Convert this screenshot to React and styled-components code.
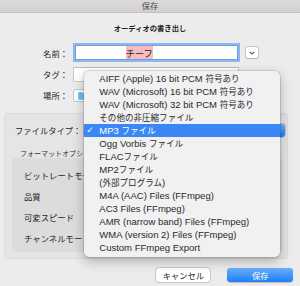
import React from 'react';
import styled, { createGlobalStyle } from 'styled-components';

const Global = createGlobalStyle`
  html, body { margin: 0; padding: 0; background: #ececec; }
  body {
    font-family: "Liberation Sans", "Noto Sans CJK JP", sans-serif;
    -webkit-font-smoothing: antialiased;
  }
  * { box-sizing: border-box; }
`;

const JP = '"Noto Sans CJK JP", "Liberation Sans", sans-serif';

const Window = styled.div`
  position: relative;
  width: 300px;
  height: 286px;
  overflow: hidden;
  background: #ececec;
  display: flex;
  flex-direction: column;
`;

const TitleBar = styled.div`
  height: 13px;
  flex: none;
  border-bottom: 1px solid #c2c0c2;
  background: linear-gradient(#dcdadc, #d2d0d2);
  text-align: center;
  font: 8.3px/10px ${JP};
  color: #4b4b4b;
`;

const Heading = styled.div`
  margin-top: 10px;
  text-align: center;
  font: 600 7.3px/10px ${JP};
  color: #1e1e1e;
`;

const Form = styled.div`
  display: flex;
  flex-direction: column;
`;

const Row = styled.div`
  display: grid;
  grid-template-columns: 68px 1fr;
  column-gap: 4.5px;
  align-items: center;
  height: ${(p) => p.$h}px;
  margin-top: ${(p) => p.$mt}px;
`;

const Label = styled.div`
  text-align: right;
  font: 8.3px/10px ${JP};
  color: #262626;
  white-space: nowrap;
`;

const NameWrap = styled.div`
  display: flex;
  align-items: center;
  gap: 6.8px;
`;

const NameInput = styled.div`
  margin-left: 2.5px;
  width: 163px;
  height: 15px;
  border: 1px solid #6f9fe0;
  box-shadow: 0 0 0 2px #8db8ef;
  background: #fff;
  display: flex;
  align-items: center;
  padding-left: 0.5px;
`;

const Selection = styled.span`
  display: inline-flex;
  align-items: center;
  height: 12.6px;
  padding: 0 0.5px 0 0.8px;
  background: #f7babd;
  font: 9.2px/12px ${JP};
  color: #1e1e1e;
`;

const Redact = styled.span`
  display: inline-block;
  width: 48.5px;
  height: 100%;
  background: #fff;
`;

const SmallButton = styled.div`
  width: 14.7px;
  height: 12.7px;
  border: 1px solid #c6c6c6;
  border-bottom-color: #b4b4b4;
  border-radius: 3px;
  background: #fff;
  display: flex;
  align-items: center;
  justify-content: center;
`;

const TextField = styled.div`
  width: 166px;
  height: 15px;
  border: 1px solid #c9c9c9;
  border-top-color: #b9b9b9;
  background: #fff;
`;

const LocPopup = styled.div`
  width: 130px;
  height: 12.4px;
  border: 1px solid #c6c6c6;
  border-radius: 3px;
  background: #fff;
  display: flex;
  align-items: center;
  padding-left: 4.5px;
`;

const Panel = styled.div`
  margin: 11px 12px 0 4px;
  padding: 11.3px 3px 7.3px 8px;
  background: #e5e5e5;
  border-radius: 4px;
  box-shadow: inset 0 0 0 1px #dcdcdc;
`;

const FileTypeRow = styled.div`
  display: flex;
  align-items: center;
  height: 13px;
  padding-left: 3px;
`;

const FileTypeLabel = styled(Label)`
  width: 69px;
  text-align: left;
`;

const Popup = styled.div`
  position: relative;
  flex: 1;
  height: 13px;
  border-radius: 3px;
  background: #fff;
  box-shadow: 0 0 0 1px #c3c3c3;
`;

const PopupArrows = styled.div`
  position: absolute;
  right: 0;
  top: 0;
  bottom: 0;
  width: 14px;
  border-radius: 0 3px 3px 0;
  background: linear-gradient(#6bb2fb, #1b7cf5);
  display: flex;
  align-items: center;
  justify-content: center;
`;

const FormatLabel = styled.div`
  margin-top: 12.5px;
  padding-left: 8px;
  font: 7px/9px ${JP};
  color: #333;
`;

const InnerBox = styled.div`
  margin-right: 2px;
  padding: 6px 0 3.7px 12px;
  background: #dcdcdc;
  border-radius: 4px;
`;

const InnerRow = styled.div`
  height: 21px;
  display: flex;
  align-items: center;
  font: 8.4px/10px ${JP};
  color: #262626;
  white-space: nowrap;
`;

const Footer = styled.div`
  margin-top: 8.5px;
  display: flex;
  justify-content: flex-end;
  gap: 17px;
  padding-right: 7px;
`;

const Button = styled.div`
  width: ${(p) => p.$w}px;
  height: 14px;
  border-radius: 3.5px;
  display: flex;
  align-items: center;
  justify-content: center;
  font: 8.3px/10px ${JP};
  color: ${(p) => (p.$primary ? '#fff' : '#222')};
  background: ${(p) => (p.$primary ? 'linear-gradient(#69affb, #1d7ef5)' : '#fff')};
  box-shadow: ${(p) =>
    p.$primary ? '0 0.5px 1px rgba(0,0,0,0.2)' : '0 0 0 1px #c8c8c8, 0 0.5px 1px rgba(0,0,0,0.15)'};
`;

const Menu = styled.div`
  position: absolute;
  left: 84px;
  top: 71px;
  width: 196px;
  padding: 1px 0 3px;
  background: #f1f1f1;
  border-radius: 5px;
  box-shadow: 0 0 0 0.5px rgba(0, 0, 0, 0.22), 0 4px 12px rgba(0, 0, 0, 0.28);
  font-size: 9.5px;
  color: #2a2a2a;
`;

const MenuItem = styled.div`
  position: relative;
  height: 13px;
  padding-left: 15.3px;
  white-space: nowrap;
  overflow: hidden;
  line-height: 13px;
  background: ${(p) => (p.$selected ? '#3a87f5' : 'transparent')};
  color: ${(p) => (p.$selected ? '#fff' : '#2a2a2a')};
`;

const ItemText = styled.span`
  display: block;
  height: 13px;
  line-height: 13px;
`;

const Check = styled.span`
  position: absolute;
  left: 2.3px;
  top: 0;
  font: bold 9px/13px "DejaVu Sans", sans-serif;
`;

const Jp = styled.span`
  font-family: ${JP};
  font-size: 0.9em;
  line-height: 1;
`;

const CJK = /([\u3000-\u30ff\u4e00-\u9fff\uff00-\uffef]+)/;

function Mixed({ text }) {
  return (
    <ItemText>
      {text
        .split(CJK)
        .filter(Boolean)
        .map((part, i) => (CJK.test(part) ? <Jp key={i}>{part}</Jp> : part))}
    </ItemText>
  );
}

const items = [
  'AIFF (Apple) 16 bit PCM 符号あり',
  'WAV (Microsoft) 16 bit PCM 符号あり',
  'WAV (Microsoft) 32 bit PCM 符号あり',
  'その他の非圧縮ファイル',
  'MP3 ファイル',
  'Ogg Vorbis ファイル',
  'FLACファイル',
  'MP2ファイル',
  '(外部プログラム)',
  'M4A (AAC) Files (FFmpeg)',
  'AC3 Files (FFmpeg)',
  'AMR (narrow band) Files (FFmpeg)',
  'WMA (version 2) Files (FFmpeg)',
  'Custom FFmpeg Export',
];

const options = ['ビットレートモード：', '品質', '可変スピード', 'チャンネルモード：'];

const Chevron = () => (
  <svg width="6" height="4" viewBox="0 0 6 4">
    <polyline points="0.7,0.8 3,3 5.3,0.8" fill="none" stroke="#555" strokeWidth="1.1" />
  </svg>
);

const Folder = () => (
  <svg width="10" height="9" viewBox="0 0 10 9">
    <path d="M0.5 1.2 h3.2 l1 1 h4.8 v6.3 h-9 z" fill="#5cb3ec" />
    <rect x="0.5" y="2.8" width="9" height="5.7" fill="#6cc0f2" />
  </svg>
);

const UpDown = () => (
  <svg width="5" height="8" viewBox="0 0 5 8">
    <polyline points="0.8,3 2.5,1.2 4.2,3" fill="none" stroke="#fff" strokeWidth="1" />
    <polyline points="0.8,5 2.5,6.8 4.2,5" fill="none" stroke="#fff" strokeWidth="1" />
  </svg>
);

export default function App() {
  return (
    <>
      <Global />
      <Window>
        <TitleBar>保存</TitleBar>
        <Heading>オーディオの書き出し</Heading>
        <Form>
          <Row $h={20} $mt={9.5}>
            <Label>名前：</Label>
            <NameWrap>
              <NameInput>
                <Selection>
                  <Redact />
                  チーフ
                </Selection>
              </NameInput>
              <SmallButton>
                <Chevron />
              </SmallButton>
            </NameWrap>
          </Row>
          <Row $h={15} $mt={4.2}>
            <Label>タグ：</Label>
            <TextField />
          </Row>
          <Row $h={12.4} $mt={7.6}>
            <Label>場所：</Label>
            <LocPopup>
              <Folder />
            </LocPopup>
          </Row>
        </Form>
        <Panel>
          <FileTypeRow>
            <FileTypeLabel>ファイルタイプ：</FileTypeLabel>
            <Popup>
              <PopupArrows>
                <UpDown />
              </PopupArrows>
            </Popup>
          </FileTypeRow>
          <FormatLabel>フォーマットオプション</FormatLabel>
          <InnerBox>
            {options.map((o) => (
              <InnerRow key={o}>{o}</InnerRow>
            ))}
          </InnerBox>
        </Panel>
        <Footer>
          <Button $w={54}>キャンセル</Button>
          <Button $w={65.6} $primary>
            保存
          </Button>
        </Footer>
        <Menu>
          {items.map((t, i) => (
            <MenuItem key={i} $selected={i === 4}>
              {i === 4 && <Check>✓</Check>}
              <Mixed text={t} />
            </MenuItem>
          ))}
        </Menu>
      </Window>
    </>
  );
}
